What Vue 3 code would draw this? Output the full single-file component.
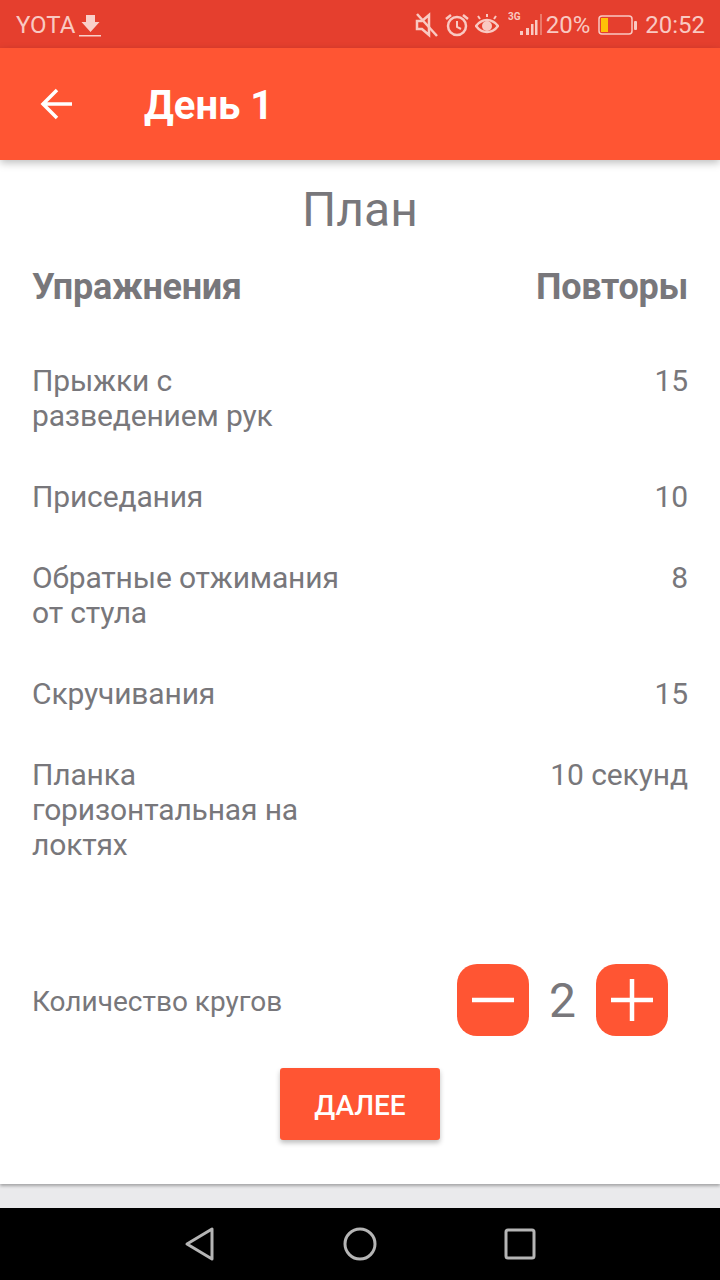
<template>
  <div class="screen">
    <div class="status-bar">
      <div class="status-left">
        <span>YOTA</span>
        <svg class="dl" width="24" height="26" viewBox="0 0 24 26">
          <path d="M8 3h9v7h4.500L12.500 20 3.500 10H8z" fill="#f9d0ca" />
          <rect x="1" y="23" width="22" height="1.500" fill="#f9d0ca" />
        </svg>
      </div>
      <div class="status-right">
        <svg class="mute" width="24" height="26" viewBox="0 0 24 26" fill="none" stroke="#f9c9c2" stroke-width="2.500">
          <path d="M2 9v8h5l7 6V3L7 9H2z" fill="none" />
          <path d="M2 2l20 22" />
        </svg>
        <svg class="alarm" width="26" height="26" viewBox="0 0 26 26" fill="none" stroke="#f9c9c2" stroke-width="2.500">
          <circle cx="13" cy="14" r="9" />
          <path d="M13 9v6l4 2" stroke-width="2" />
          <path d="M2 7l5-4M24 7l-5-4" />
        </svg>
        <svg class="eye" width="24" height="24" viewBox="0 0 24 24" fill="none" stroke="#f9c9c2" stroke-width="2.500">
          <path d="M1 13c6-8 16-8 22 0-6 8-16 8-22 0z" />
          <circle cx="12" cy="13" r="5" fill="#f9c9c2" stroke="none" />
          <path d="M5 6L3 3M12 4V1M19 6l2-3" stroke-width="2" />
        </svg>
        <svg class="signal" width="34" height="28" viewBox="0 0 34 28">
          <text x="0" y="9" class="net">3G</text>
          <rect x="12" y="20" width="3" height="4" fill="#f9c9c2" />
          <rect x="18" y="17" width="3" height="7" fill="#f9c9c2" />
          <rect x="23" y="13" width="2.500" height="11" fill="#f9c9c2" />
          <rect x="27" y="9" width="2.500" height="15" fill="#f9c9c2" />
          <rect x="32" y="3" width="2" height="21" fill="#ec7a6b" />
        </svg>
        <span class="pct">20%</span>
        <svg class="batt" width="40" height="22" viewBox="0 0 40 22">
          <rect x="1" y="2" width="33" height="18" rx="3" fill="none" stroke="#f9c9c2" stroke-width="1.500" />
          <rect x="3" y="4" width="7" height="14" fill="#ffc107" />
          <rect x="36" y="7" width="3" height="9" rx="1" fill="#f9c9c2" />
        </svg>
        <span>20:52</span>
      </div>
    </div>

    <header class="app-bar">
      <svg class="back" width="36" height="32" viewBox="0 0 36 32" fill="none" stroke="#fff" stroke-width="3.500">
        <path d="M34 16H4M19 2L5 16l14 14" />
      </svg>
      <h1>День 1</h1>
    </header>

    <main class="content">
      <h2>План</h2>
      <div class="table-head">
        <span>Упражнения</span>
        <span>Повторы</span>
      </div>
      <div class="rows">
        <div v-for="item in exercises" :key="item.name" class="row">
          <span class="name">{{ item.name }}</span>
          <span>{{ item.reps }}</span>
        </div>
      </div>
      <div class="rounds">
        <span>Количество кругов</span>
        <div class="stepper">
          <button class="step" type="button" aria-label="Меньше" @click="changeRounds(-1)">
            <svg width="44" height="44" viewBox="0 0 44 44"><rect x="1" y="19.750" width="42" height="4.500" fill="#fff" /></svg>
          </button>
          <span class="count">{{ rounds }}</span>
          <button class="step" type="button" aria-label="Больше" @click="changeRounds(1)">
            <svg width="44" height="44" viewBox="0 0 44 44"><path d="M1 19.750h18.750V1h4.500v18.750H43v4.500H24.250V43h-4.500V24.250H1z" fill="#fff" /></svg>
          </button>
        </div>
      </div>
      <button class="next" type="button">ДАЛЕЕ</button>
    </main>

    <div class="gap"></div>

    <nav class="nav-bar">
      <svg width="32" height="36" viewBox="0 0 32 36" fill="none" stroke="#b5b5b5" stroke-width="3">
        <path d="M28 3v30L3 18z" stroke-linejoin="round" />
      </svg>
      <svg width="34" height="34" viewBox="0 0 34 34" fill="none" stroke="#b5b5b5" stroke-width="3">
        <circle cx="17" cy="17" r="15" />
      </svg>
      <svg width="32" height="32" viewBox="0 0 32 32" fill="none" stroke="#b5b5b5" stroke-width="3">
        <rect x="2" y="2" width="28" height="28" rx="2" />
      </svg>
    </nav>
  </div>
</template>

<script setup>
import { ref } from 'vue'

const exercises = [
  { name: 'Прыжки с разведением рук', reps: '15' },
  { name: 'Приседания', reps: '10' },
  { name: 'Обратные отжимания от стула', reps: '8' },
  { name: 'Скручивания', reps: '15' },
  { name: 'Планка горизонтальная на локтях', reps: '10 секунд' }
]

const rounds = ref(2)

const changeRounds = (delta) => {
  rounds.value = Math.max(1, rounds.value + delta)
}
</script>

<style scoped>
.screen {
  width: 720px;
  height: 1280px;
  display: flex;
  flex-direction: column;
  overflow: hidden;
  background: #eaeaec;
  font-family: Roboto, "Noto Sans", sans-serif;
  color: #78777b;
}

.status-bar {
  height: 48px;
  flex: none;
  box-sizing: border-box;
  display: flex;
  align-items: center;
  justify-content: space-between;
  padding: 2px 15px 0 16px;
  background: #e53f2e;
  color: #f9c9c2;
  font-size: 24px;
}

.status-left,
.status-right {
  display: flex;
  align-items: center;
}

.status-left .dl {
  margin-left: 3px;
}

.mute,
.alarm {
  margin-right: 5px;
}

.eye {
  margin-right: 9px;
}

.signal {
  margin-right: 4px;
}

.net {
  font-size: 10px;
  font-weight: 700;
  fill: #f9c9c2;
}

.pct {
  margin-right: 8px;
}

.batt {
  margin-right: 7px;
}

.app-bar {
  height: 112px;
  flex: none;
  display: flex;
  align-items: center;
  position: relative;
  z-index: 1;
  padding-left: 38px;
  background: #ff5533;
  box-shadow: 0 3px 8px rgba(0, 0, 0, 0.25);
}

.app-bar h1 {
  margin: 3px 0 0 70px;
  font-size: 40px;
  font-weight: 700;
  color: #fff;
}

.content {
  height: 1024px;
  flex: none;
  padding: 0 32px;
  box-sizing: border-box;
  background: #fff;
  box-shadow: 0 2px 3px rgba(0, 0, 0, 0.3);
}

.content h2 {
  margin: 0;
  padding-top: 22px;
  font-size: 48px;
  line-height: 56px;
  font-weight: 400;
  text-align: center;
}

.table-head {
  display: flex;
  justify-content: space-between;
  margin-top: 30px;
  font-size: 36px;
  line-height: 38px;
  font-weight: 700;
  letter-spacing: -0.3px;
}

.rows {
  display: flex;
  flex-direction: column;
  gap: 46px;
  margin-top: 57px;
}

.row {
  display: flex;
  justify-content: space-between;
  font-size: 30px;
  line-height: 35px;
  letter-spacing: -0.1px;
}

.name {
  width: 312px;
  letter-spacing: -0.15px;
}

.rounds {
  display: flex;
  align-items: center;
  justify-content: space-between;
  margin-top: 102px;
  padding-right: 20px;
  font-size: 28px;
}

.rounds > span:first-child {
  margin-top: 3px;
}

.stepper {
  display: flex;
  align-items: center;
}

.step {
  width: 72px;
  height: 72px;
  display: flex;
  align-items: center;
  justify-content: center;
  padding: 0;
  border: none;
  border-radius: 20px;
  background: #ff5533;
}

.count {
  width: 67px;
  text-align: center;
  font-size: 48px;
}

.next {
  display: block;
  width: 160px;
  height: 72px;
  margin: 32px auto 0;
  padding: 2px 0 0;
  border: none;
  border-radius: 3px;
  background: #ff5533;
  color: #fff;
  font-family: inherit;
  font-size: 28px;
  font-weight: 500;
  box-shadow: 0 3px 5px rgba(0, 0, 0, 0.25);
}

.gap {
  height: 24px;
  flex: none;
}

.nav-bar {
  height: 72px;
  flex: none;
  display: flex;
  align-items: center;
  justify-content: space-between;
  padding: 0 184px;
  background: #000;
}
</style>
